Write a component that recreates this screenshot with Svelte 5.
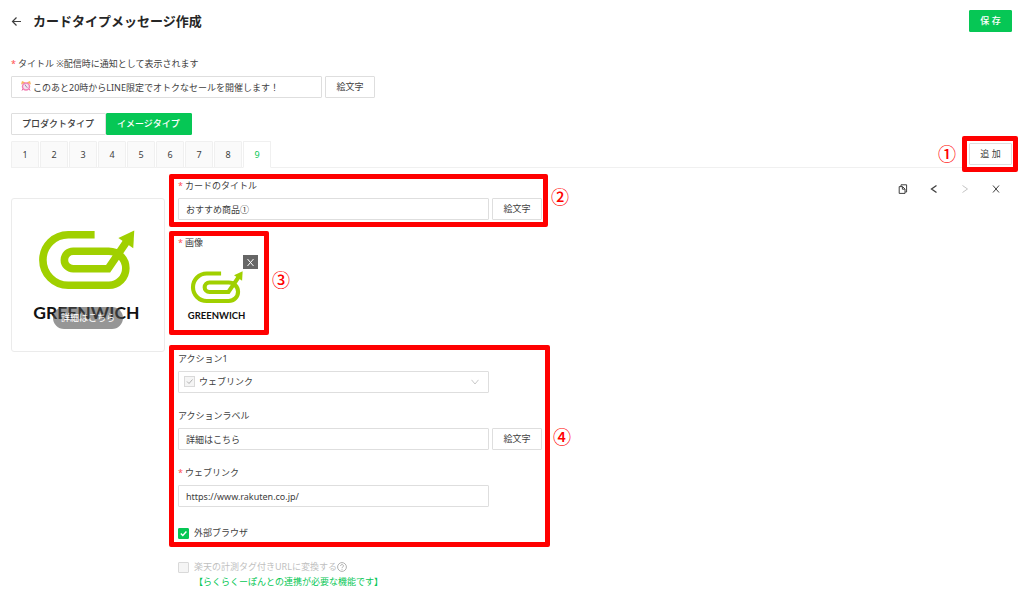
<script>
  let title = $state('このあと20時からLINE限定でオトクなセールを開催します！');
  let cardTitle = $state('おすすめ商品①');
  let actionLabel = $state('詳細はこちら');
  let link = $state('https://www.rakuten.co.jp/');
  let external = $state(true);
  let convert = $state(false);
  let type = $state('image');
  let current = $state(9);
  const cards = [1, 2, 3, 4, 5, 6, 7, 8, 9];
</script>

{#snippet logo(viewBox)}
  <svg class="logo" {viewBox} role="img" aria-label="GREENWICH">
    <path
      d="M285 133H205A76.5 76.5 0 0 0 205 286H328A51.5 51.5 0 0 0 328 183H220A26.5 26.5 0 0 0 220 236H326L386 148"
      fill="none" stroke="#a0d000" stroke-width="23" />
    <path d="M405 120L357 143L402 174Z" fill="#a0d000" />
    <text x="260" y="388" text-anchor="middle" font-size="53">GREENWICH</text>
  </svg>
{/snippet}

<main>
  <header>
    <button class="icon" aria-label="戻る">
      <svg width="11" height="11" viewBox="0 0 11 11"><path d="M10 5.5H1.5M5.5 1.5L1.5 5.5L5.5 9.5" stroke-width="1.2" /></svg>
    </button>
    <h1>カードタイプメッセージ作成</h1>
    <button class="btn primary">保 存</button>
  </header>

  <div class="field title-field">
    <label for="title"><span class="req">*</span>タイトル ※配信時に通知として表示されます</label>
    <div class="row">
      <div class="control">
        <svg class="clock" width="10" height="10" viewBox="0 0 20 20" aria-hidden="true">
          <path d="M4 16L2 19M16 16L18 19" stroke="#e0509a" stroke-width="2" />
          <path d="M0 7L2 0L9 3Z" fill="#f9b45c" />
          <path d="M20 7L18 0L11 3Z" fill="#f9b45c" />
          <circle cx="10" cy="11" r="7" fill="#f4e3f0" stroke="#f282b4" stroke-width="3" />
          <path d="M8 7L10 11L13 13" fill="none" stroke="#8a6a96" stroke-width="1.5" />
        </svg>
        <input id="title" class="text with-clock" type="text" bind:value={title} />
      </div>
      <button class="btn">絵文字</button>
    </div>
  </div>

  <div class="types" role="radiogroup" aria-label="タイプ">
    <label class:active={type === 'product'}>
      <input type="radio" name="type" value="product" bind:group={type} />プロダクトタイプ
    </label>
    <label class:active={type === 'image'}>
      <input type="radio" name="type" value="image" bind:group={type} />イメージタイプ
    </label>
  </div>

  <div class="tabs">
    <div class="tablist" role="tablist">
      {#each cards as n}
        <button class="tab" role="tab" aria-selected={current === n} class:current={current === n} onclick={() => (current = n)}>{n}</button>
      {/each}
    </div>
    <div class="marked add">
      <button class="btn wide">追 加</button>
      <div class="frame"><span>①</span></div>
    </div>
  </div>

  <div class="body">
    <div class="preview">
      {@render logo('35 25 460 460')}
      <span class="pill">{actionLabel}</span>
    </div>

    <form onsubmit={(e) => e.preventDefault()}>
      <div class="field marked card-title">
        <label for="card-title"><span class="req">*</span>カードのタイトル</label>
        <div class="row">
          <div class="control"><input id="card-title" class="text" type="text" bind:value={cardTitle} /></div>
          <button class="btn" type="button">絵文字</button>
        </div>
        <div class="frame"><span>②</span></div>
      </div>

      <div class="field marked image">
        <div class="label"><span class="req">*</span>画像</div>
        <div class="thumb">
          {@render logo('45 30 440 440')}
          <button class="remove" type="button" aria-label="画像を削除">
            <svg width="9" height="9" viewBox="0 0 9 9"><path d="M1.5 1L7.5 8M7.5 1L1.5 8" /></svg>
          </button>
        </div>
        <div class="frame"><span>③</span></div>
      </div>

      <div class="marked actions">
        <div class="field">
          <label for="action">アクション1</label>
          <div class="control">
            <svg class="mark" width="11" height="11" viewBox="0 0 11 11" aria-hidden="true">
              <rect x=".5" y=".5" width="10" height="10" fill="#f5f5f5" stroke="#d9d9d9" />
              <path d="M3 5.5L5 7.5L8.5 3.5" stroke="#b0b0b0" />
            </svg>
            <select id="action"><option>ウェブリンク</option></select>
            <svg class="chevron" width="8" height="6" viewBox="0 0 8 6" aria-hidden="true"><path d="M.5 .8L4 5L7.5 .8" stroke="#c8c8c8" /></svg>
          </div>
        </div>
        <div class="field">
          <label for="action-label">アクションラベル</label>
          <div class="row">
            <div class="control"><input id="action-label" class="text" type="text" bind:value={actionLabel} /></div>
            <button class="btn" type="button">絵文字</button>
          </div>
        </div>
        <div class="field">
          <label for="link"><span class="req">*</span>ウェブリンク</label>
          <div class="control"><input id="link" class="text" type="text" bind:value={link} /></div>
        </div>
        <label class="check">
          <input type="checkbox" bind:checked={external} />
          <svg width="11" height="11" viewBox="0 0 11 11" aria-hidden="true"><path d="M2.8 5.4L4.8 7.4L8.4 3.6" stroke="#fff" stroke-width="1.4" /></svg>
          外部ブラウザ
        </label>
        <div class="frame"><span>④</span></div>
      </div>

      <label class="check disabled">
        <input type="checkbox" disabled bind:checked={convert} />
        <span>楽天の計測タグ付きURLに変換する</span>
        <svg class="help" width="10" height="10" viewBox="0 0 10 10" aria-hidden="true">
          <circle cx="5" cy="5" r="4.4" />
          <path d="M3.5 4C3.5 2.1 6.5 2.1 6.5 3.9C6.5 5 5 4.9 5 6.1M5 6.9V7.8" />
        </svg>
      </label>
      <p class="note">【らくらくーぽんとの連携が必要な機能です】</p>
    </form>

    <div class="tools">
      <button class="icon" aria-label="複製">
        <svg width="10" height="10" viewBox="0 0 10 10"><path d="M3 2.5V.8H8.6V8H7.2M1.2 2.6H4.6L7 5V9.4H1.2ZM4.4 2.8V5.2H6.8" /></svg>
      </button>
      <button class="icon" aria-label="前へ">
        <svg width="10" height="10" viewBox="0 0 10 10"><path d="M7.5 1.5L2.5 5L7.5 8.5" stroke-width="1.3" /></svg>
      </button>
      <button class="icon" aria-label="次へ" disabled>
        <svg width="10" height="10" viewBox="0 0 10 10"><path d="M2.5 1.5L7.5 5L2.5 8.5" /></svg>
      </button>
      <button class="icon" aria-label="閉じる">
        <svg width="10" height="10" viewBox="0 0 10 10"><path d="M2 1.5L8 8.5M8 1.5L2 8.5" /></svg>
      </button>
    </div>
  </div>
</main>

<style>
  :global(body) { margin: 0; background: #fff; }
  main {
    padding: 10px 12px 12px 11px;
    font: 9px/20px "Noto Sans", "Noto Sans CJK JP", sans-serif;
    color: #404040;
  }
  main, main * { box-sizing: border-box; }
  button, input, select { font: inherit; color: inherit; margin: 0; }
  svg { display: block; fill: none; stroke-width: 1; }
  header { display: flex; align-items: center; height: 22px; }
  h1 { flex: 1; margin: 0 0 0 11px; font-size: 13px; line-height: 20px; font-weight: 700; color: #262626; }
  .icon { display: grid; place-items: center; padding: 0; border: 0; background: none; }
  .icon svg { stroke: #404040; }
  .icon:disabled svg { stroke: #c4c4c4; }
  .btn {
    height: 22px; padding: 0; line-height: 20px; white-space: nowrap;
    border: 1px solid #dedede; border-radius: 1px; background: #fff;
  }
  .btn.primary, .btn.wide { width: 43px; }
  .btn.primary { border-color: #06c755; background: #06c755; color: #fff; font-weight: 500; }
  .field label, .label { display: block; height: 20px; margin-bottom: 3px; line-height: 22px; }
  .field { margin-bottom: 12px; }
  .req { color: #ff4d4f; margin-right: 2px; }
  .row { display: flex; gap: 3px; }
  .row .btn { width: 50px; }
  .control { position: relative; width: 100%; max-width: 311px; }
  .text, select {
    display: block; width: 100%; height: 22px; padding: 0 7px;
    border: 1px solid #dedede; border-radius: 1px; background: #fff; outline: none;
  }
  select { appearance: none; padding: 0 20px; }
  .mark { position: absolute; left: 6px; top: 5px; }
  .chevron { position: absolute; right: 10px; top: 8px; }
  .clock { position: absolute; left: 10px; top: 5px; }
  .with-clock { padding-left: 21px; }
  .title-field { margin: 21px 0 15px; }
  .types { display: flex; }
  .types label {
    height: 22px; padding: 0 11px 0 10px; border: 1px solid #dedede; border-radius: 1px; font-weight: 500;
  }
  .types label.active { border-color: #06c755; background: #06c755; color: #fff; }
  .types input { position: absolute; opacity: 0; width: 1px; height: 1px; margin: 0; }
  .tabs {
    display: flex; justify-content: space-between; align-items: center;
    height: 27px; margin-top: 6px; border-bottom: 1px solid #f0f0f0;
  }
  .tablist { display: flex; gap: 1px; align-self: flex-start; }
  .tab {
    width: 28px; height: 27px; padding: 0; border: 1px solid #f0f0f0;
    border-radius: 1px 1px 0 0; background: #fafafa;
  }
  .tab.current { background: #fff; border-bottom-color: #fff; color: #06c755; }
  .marked { position: relative; }
  .frame { position: absolute; border: 5px solid #f00; border-radius: 2px; pointer-events: none; }
  .frame span {
    position: absolute; left: calc(100% + 8px); top: 50%; transform: translateY(-50%);
    font: 500 18px/20px "Noto Sans CJK JP", sans-serif; color: #f00;
  }
  .add .frame { inset: -7px -6px -7px -7px; }
  .add .frame span { left: auto; right: calc(100% + 11px); top: 45%; }
  .card-title .frame { inset: -1px -6px -7px -9px; }
  .card-title .frame span { top: 40%; }
  .image .frame { inset: -1px -12px 1px -9px; }
  .image .frame span { top: 46%; }
  .actions .frame { inset: -3px -8px -4px -9px; }
  .actions .frame span { top: 45%; }
  .body { display: flex; align-items: flex-start; padding-top: 7px; }
  .preview {
    position: relative; flex: none; width: 154px; margin: 23px 13px 0 0;
    border: 1px solid #ebebeb; border-radius: 3px;
  }
  .logo { width: 100%; }
  .logo text { font-family: Lato, sans-serif; font-weight: 700; fill: #111; }
  .pill {
    position: absolute; left: 50%; bottom: 22px; transform: translateX(-50%);
    padding: 1px 8px; border-radius: 11px; background: rgb(80 80 80 / 60%); color: #fff; white-space: nowrap;
  }
  form { flex: 0 1 364px; min-width: 0; }
  .image { width: 79px; }
  .thumb { position: relative; height: 81px; }
  .remove {
    position: absolute; right: -1px; top: 0; display: grid; place-items: center;
    width: 15px; height: 14px; padding: 0; border: 0; background: #666;
  }
  .remove svg { stroke: #fff; }
  .thumb .logo { margin-top: 1px; }
  .check { position: relative; display: flex; align-items: center; gap: 5px; margin-top: 16px; }
  .check input {
    appearance: none; width: 11px; height: 11px; border: 1px solid #d9d9d9; border-radius: 1px; background: #fff;
  }
  .check input:checked { border-color: #06c755; background: #06c755; }
  .check input + svg { position: absolute; left: 0; }
  .check.disabled { margin-top: 14px; color: #bfbfbf; }
  .check.disabled input { background: #f5f5f5; }
  .check .help { margin-left: -5px; stroke: #b0b0b0; }
  .note { margin: -5px 0 0 16px; color: #06c755; }
  .tools { display: flex; gap: 21px; margin: 9px 11px 0 auto; }
</style>
